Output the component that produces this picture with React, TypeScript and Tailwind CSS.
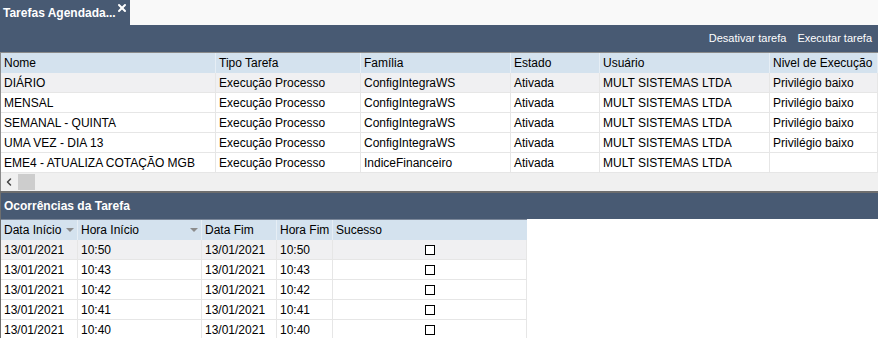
import { X, ChevronLeft } from "lucide-react";

type Task = {
  nome: string;
  tipo: string;
  familia: string;
  estado: string;
  usuario: string;
  nivel: string;
};

const tasks: Task[] = [
  { nome: "DIÁRIO", tipo: "Execução Processo", familia: "ConfigIntegraWS", estado: "Ativada", usuario: "MULT SISTEMAS LTDA", nivel: "Privilégio baixo" },
  { nome: "MENSAL", tipo: "Execução Processo", familia: "ConfigIntegraWS", estado: "Ativada", usuario: "MULT SISTEMAS LTDA", nivel: "Privilégio baixo" },
  { nome: "SEMANAL - QUINTA", tipo: "Execução Processo", familia: "ConfigIntegraWS", estado: "Ativada", usuario: "MULT SISTEMAS LTDA", nivel: "Privilégio baixo" },
  { nome: "UMA VEZ - DIA 13", tipo: "Execução Processo", familia: "ConfigIntegraWS", estado: "Ativada", usuario: "MULT SISTEMAS LTDA", nivel: "Privilégio baixo" },
  { nome: "EME4 - ATUALIZA COTAÇÃO MGB", tipo: "Execução Processo", familia: "IndiceFinanceiro", estado: "Ativada", usuario: "MULT SISTEMAS LTDA", nivel: "" },
];

const ocorrencias = ["10:50", "10:43", "10:42", "10:41", "10:40"];

const topCols = "grid grid-cols-[215px_145px_150px_89px_170px_1fr]";
const bottomCols = "grid grid-cols-[77px_124px_75px_56px_194px]";

function SortArrow() {
  return (
    <span className="ml-auto mr-[3px] h-0 w-0 border-x-[4px] border-t-[4px] border-x-transparent border-t-[#8c8c8c]" />
  );
}

export default function App() {
  return (
    <div className="h-[338px] w-[878px] overflow-hidden bg-white text-[12px] leading-none text-black [font-family:'Liberation_Sans',Arial,sans-serif]">
      {/* tab strip */}
      <div className="flex h-[25px] bg-[#f9f9f9]">
        <div className="flex w-[130px] shrink-0 items-start whitespace-nowrap bg-[#485a73] pl-[3px] pt-[7px] font-bold text-white">
          <span>Tarefas Agendada...</span>
          <X className="-mt-[5px] ml-auto mr-[3px] h-[12px] w-[12px] shrink-0" strokeWidth={4} />
        </div>
      </div>

      {/* toolbar */}
      <div className="flex h-[27px] items-center justify-end gap-[11px] bg-[#485a73] pr-[6px] text-[11px] text-white">
        <span>Desativar tarefa</span>
        <span>Executar tarefa</span>
      </div>

      {/* tasks grid */}
      <div className="border-l border-t border-[#8a8a8a]">
        <div className={`${topCols} h-[20px] items-center bg-[#d4e2ee]`}>
          {["Nome", "Tipo Tarefa", "Família", "Estado", "Usuário", "Nivel de Execução"].map((h) => (
            <div key={h} className="flex h-full items-center whitespace-nowrap border-r border-[#e6eef5] pl-[3px]">
              {h}
            </div>
          ))}
        </div>
        {tasks.map((t, i) => (
          <div
            key={t.nome}
            className={`${topCols} h-[20px] border-b border-[#e6e6e6] ${i === 0 ? "bg-[#f0f0f2]" : "bg-white"}`}
          >
            {[t.nome, t.tipo, t.familia, t.estado, t.usuario, t.nivel].map((v, j) => (
              <div key={j} className="flex h-full items-center whitespace-nowrap border-r border-[#e6e6e6] pl-[3px]">
                {v}
              </div>
            ))}
          </div>
        ))}
        {/* horizontal scrollbar */}
        <div className="flex h-[18px] items-center bg-[#f0f0f0]">
          <ChevronLeft className="ml-[2px] h-[12px] w-[12px] text-[#444]" strokeWidth={3} />
          <div className="ml-[3px] h-[16px] w-[17px] bg-[#cdcdcd]" />
        </div>
      </div>

      {/* occurrences panel */}
      <div className="border-l border-t-2 border-[#6e6e6e]">
        <div className="flex h-[26px] items-center bg-[#485a73] pl-[3px] font-bold text-white">
          Ocorrências da Tarefa
        </div>
        <div className="w-[526px]">
          <div className={`${bottomCols} h-[21px] border-t border-[#7b8799] bg-[#d4e2ee]`}>
            <div className="flex items-center whitespace-nowrap border-r border-[#e6eef5] pl-[3px]">
              Data Início
              <SortArrow />
            </div>
            <div className="flex items-center whitespace-nowrap border-r border-[#e6eef5] pl-[3px]">
              Hora Início
              <SortArrow />
            </div>
            <div className="flex items-center whitespace-nowrap border-r border-[#e6eef5] pl-[3px]">Data Fim</div>
            <div className="flex items-center whitespace-nowrap border-r border-[#e6eef5] pl-[3px]">Hora Fim</div>
            <div className="flex items-center pl-[3px]">Sucesso</div>
          </div>
          {ocorrencias.map((h, i) => (
            <div
              key={h}
              className={`${bottomCols} h-[20px] border-b border-[#e6e6e6] ${i === 0 ? "bg-[#f0f0f2]" : "bg-white"}`}
            >
              <div className="flex items-center border-r border-[#e6e6e6] pl-[3px]">13/01/2021</div>
              <div className="flex items-center border-r border-[#e6e6e6] pl-[3px]">{h}</div>
              <div className="flex items-center border-r border-[#e6e6e6] pl-[3px]">13/01/2021</div>
              <div className="flex items-center border-r border-[#e6e6e6] pl-[3px]">{h}</div>
              <div className="flex items-center justify-center border-r border-[#e6e6e6]">
                <span className="h-[10px] w-[10px] border border-black bg-white" />
              </div>
            </div>
          ))}
        </div>
      </div>
    </div>
  );
}
